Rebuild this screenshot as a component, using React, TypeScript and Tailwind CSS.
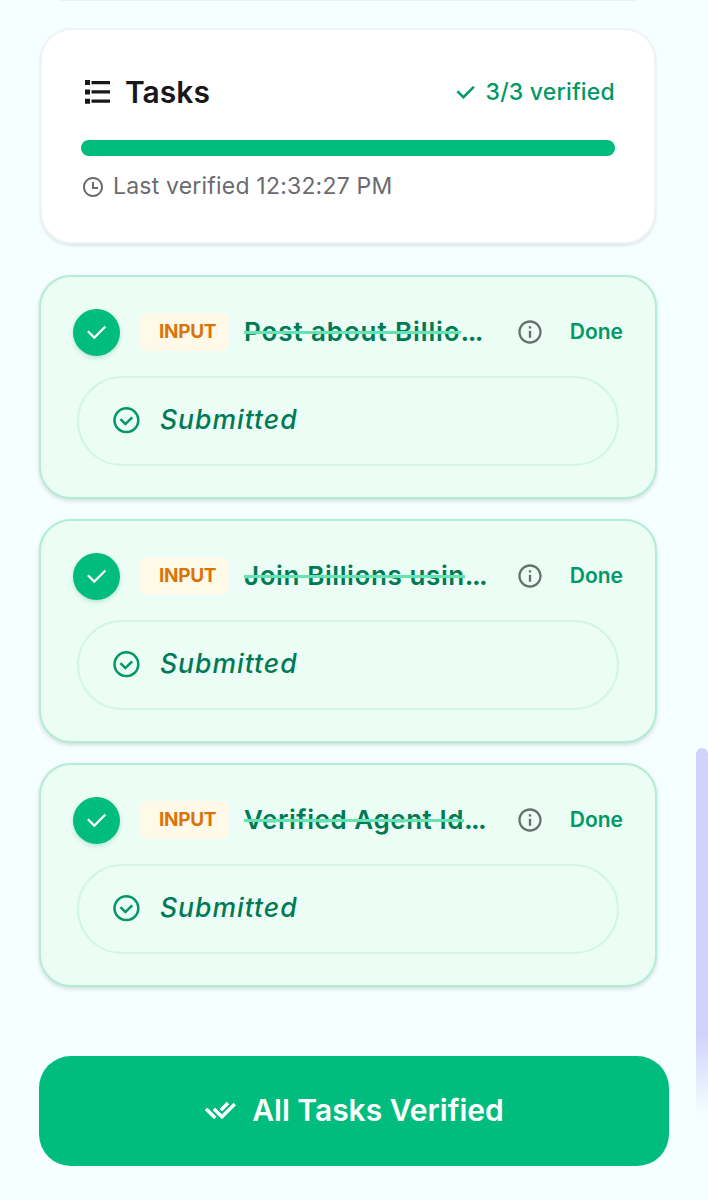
import { RiCheckDoubleLine, RiCheckLine, RiInformationLine, RiTimeLine } from 'react-icons/ri';

interface Task {
  id: number;
  type: string;
  title: string;
  tracking: string;
}

const tasks: Task[] = [
  { id: 1, type: 'INPUT', title: 'Post about Billio', tracking: 'tracking-[0.9px]' },
  { id: 2, type: 'INPUT', title: 'Join Billions usin', tracking: 'tracking-[0.6px]' },
  { id: 3, type: 'INPUT', title: 'Verified Agent Id', tracking: 'tracking-[0.55px]' },
];

function ListIcon() {
  return (
    <svg viewBox="0 0 26 24" className="ml-[4px] h-6 w-[26px]" fill="currentColor">
      <path d="M0 0h5v5H0zM0 9.4h5v5H0zM0 18.8h5v5H0zM6.5 1h18.5v3.2H6.5zM6.5 10.3h18.5v3.2H6.5zM6.5 19.6h18.5v3.2H6.5z" />
    </svg>
  );
}

function SubmittedIcon() {
  return (
    <svg viewBox="0 0 28 28" className="size-7" fill="none" stroke="currentColor" strokeWidth="2.5">
      <circle cx="14.4" cy="14.2" r="11.9" />
      <path d="M8.4 13.2l5 4.9 6.8-6.8" />
    </svg>
  );
}

function TasksSummary() {
  return (
    <section className="ml-px h-[216px] w-[616px] rounded-[32px] border-2 border-[#f1f3f4] bg-white px-[39px] pt-[42px] shadow-[0_2px_3px_rgba(0,0,0,0.1)]">
      <div className="flex h-10 items-center justify-between">
        <div className="flex items-center text-[#18181b]">
          <ListIcon />
          <h2 className="ml-[14px] text-[30px] font-semibold">Tasks</h2>
        </div>
        <div className="flex items-center text-[#009966]">
          <RiCheckLine className="size-[25px] stroke-current stroke-[0.6]" />
          <span className="ml-[8px] pt-px text-[23px] font-medium tracking-[0.2px]">
            3/3 verified
          </span>
        </div>
      </div>
      <div className="mt-[27.5px] h-4 rounded-full bg-[#e5e7eb]">
        <div className="h-full w-full rounded-full bg-[#00bc7d]" />
      </div>
      <div className="mt-[15px] flex h-8 items-center text-[#6b6b6e]">
        <RiTimeLine className="size-6" />
        <span className="ml-2 text-[23px] tracking-[0.2px]">Last verified 12:32:27 PM</span>
      </div>
    </section>
  );
}

function TaskCard({ task }: { task: Task }) {
  return (
    <li className="h-[224px] w-[618px] rounded-[32px] border-2 border-[#b3edd5] bg-[#ebfdf5] px-[32px] pt-[31px] shadow-[0_2px_4px_rgba(0,0,0,0.14)]">
      <div className="flex h-12 items-center whitespace-nowrap">
        <div className="flex size-[47px] shrink-0 items-center justify-center rounded-full bg-[#00bc7d] text-white shadow-[0_2px_4px_rgba(0,120,80,0.2)]">
          <RiCheckLine className="size-[27px]" />
        </div>
        <span className="ml-[20px] flex h-[38px] w-[89px] shrink-0 items-center rounded-lg bg-[#fff9ea] pl-[19px] text-[19px] font-bold tracking-[-0.3px] text-[#d97508]">
          {task.type}
        </span>
        <div className="ml-[15px] w-[272px] shrink-0 pb-[2px] text-[26px] font-semibold text-[#007a55]">
          <span className="relative inline-block">
            <span className={task.tracking}>{task.title}</span>
            <span className="absolute inset-x-0 top-[19px] h-[3px] bg-[#66e3b3]" />
          </span>
          <span className="font-bold tracking-[-1.6px]">...</span>
        </div>
        <RiInformationLine className="size-7 shrink-0 text-[#66706c]" />
        <span className="ml-auto text-[21px] font-semibold text-[#009966]">Done</span>
      </div>
      <div className="mt-5 ml-[4px] flex h-[90px] w-[542px] items-center rounded-full border-2 border-[#d3f5e6] pb-[2px] pl-[33px] text-[#009966]">
        <SubmittedIcon />
        <span className="ml-[20px] text-[26.5px] font-medium tracking-[1px] text-[#007a55] italic">
          Submitted
        </span>
      </div>
    </li>
  );
}

export default function App() {
  return (
    <div className="relative h-[1200px] w-[708px] overflow-hidden bg-[#f5ffff] pl-[39px] font-['Inter',sans-serif]">
      <div className="ml-[22px] h-[28px] w-[574px]">
        <div className="h-px bg-[#e9f1f2]" />
      </div>
      <TasksSummary />
      <ul className="mt-[31px] flex flex-col gap-5">
        {tasks.map((task) => (
          <TaskCard key={task.id} task={task} />
        ))}
      </ul>
      <button className="mt-[69px] flex h-[110px] w-[630px] items-center justify-center rounded-[32px] bg-[#00bc7d] pb-[2px] text-white">
        <RiCheckDoubleLine className="size-[33px] stroke-current stroke-[0.7]" />
        <span className="ml-[15px] text-[30px] font-semibold">All Tasks Verified</span>
      </button>
      {/* scroll thumb */}
      <div className="absolute top-[748px] left-[696px] h-[368px] w-3 rounded-t-full bg-linear-to-b from-[#d2d3fc] from-78% to-[#f5ffff]" />
    </div>
  );
}
